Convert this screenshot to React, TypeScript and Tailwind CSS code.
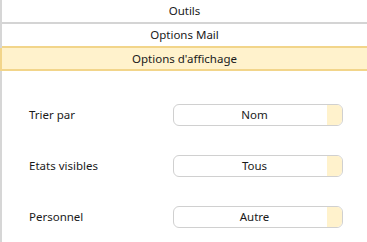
import React from "react";

const ROWS = [
  { label: "Trier par", value: "Nom" },
  { label: "Etats visibles", value: "Tous" },
  { label: "Personnel", value: "Autre" },
];

const Picker: React.FC<{ value: string }> = ({ value }) => (
  <div className="flex h-[22px] w-[170px] overflow-hidden rounded-[6px] border border-[#d0d0d0]">
    <div className="flex flex-1 items-center justify-center pl-[8px] text-[11.5px]">{value}</div>
    <div className="w-[15px] bg-[#fff2cc]" />
  </div>
);

export default function App() {
  return (
    <div
      className="h-[242px] w-[367px] border-l-2 border-[#d6d6d6] bg-white text-[#1a1a1a]"
      style={{ fontFamily: '"Noto Sans", "Open Sans", sans-serif' }}
    >
      <div className="flex h-[24px] items-center justify-center border-b-2 border-[#d4d4d4] text-[11.5px]">
        Outils
      </div>
      <div className="flex h-[24px] items-center justify-center border-b-2 border-[#f2d58a] text-[11.5px]">
        Options Mail
      </div>
      <div className="-ml-[2px] flex h-[23px] items-center justify-center border-b-2 border-l-2 border-[#f2d58a] bg-[#fff2cc] text-[11.5px]">
        Options d'affichage
      </div>
      <div className="mt-[33px] flex flex-col gap-[29px]">
        {ROWS.map((r) => (
          <div key={r.label} className="flex items-center">
            <div className="w-[171px] pl-[27px] text-[11.5px]">{r.label}</div>
            <Picker value={r.value} />
          </div>
        ))}
      </div>
    </div>
  );
}
